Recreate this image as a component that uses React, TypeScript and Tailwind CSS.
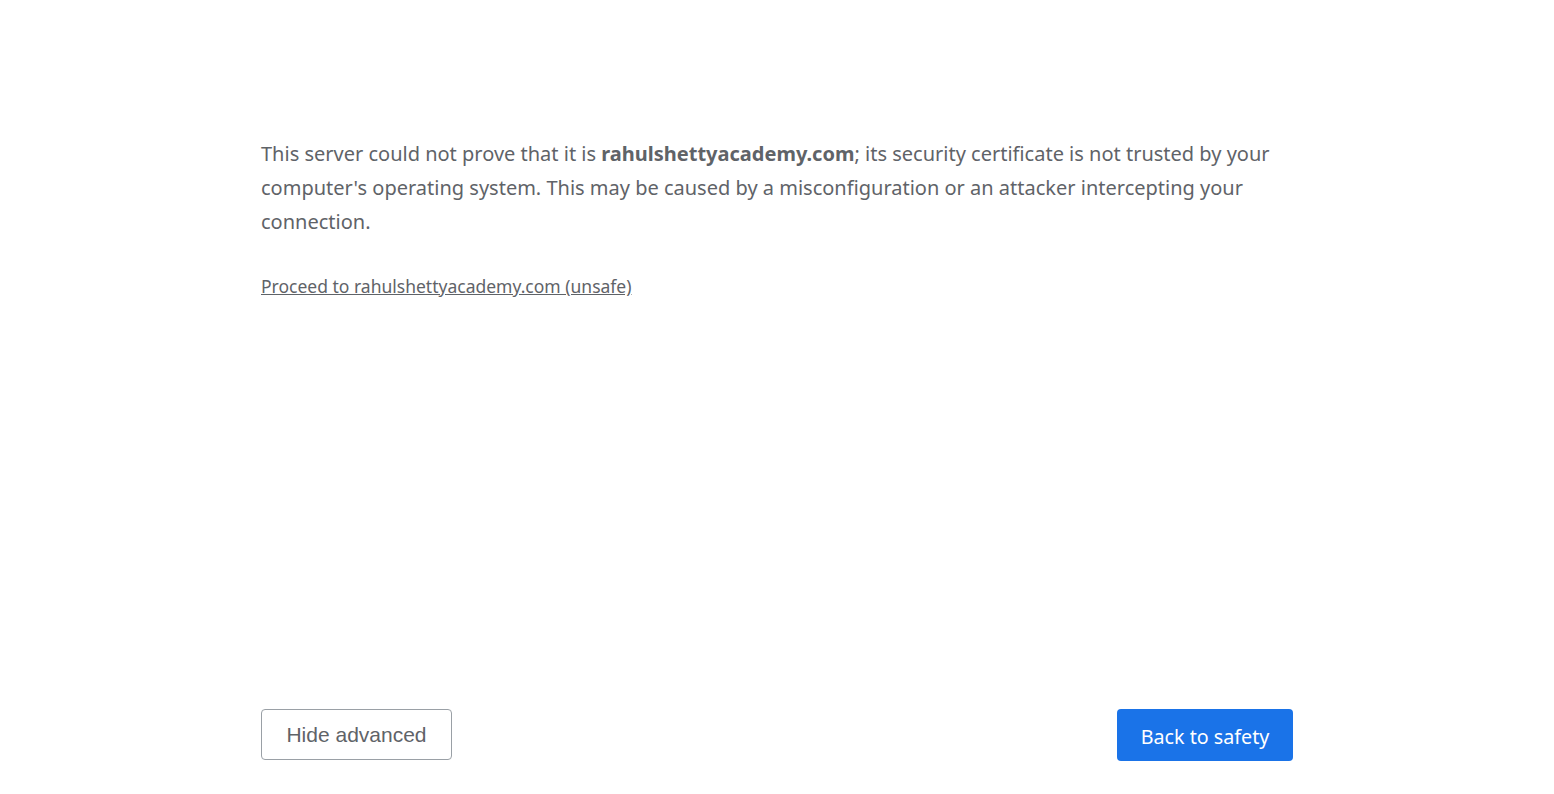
export default function App() {
  return (
    <div className="min-h-screen bg-white flex flex-col font-['Noto_Sans',sans-serif] text-[#5f6368]">
      <div className="w-[1032px] mx-auto flex-1 flex flex-col pt-[137px] pb-[33px]">
        {/* Details text */}
        <p className="text-[20px] leading-[34px]">
          This server could not prove that it is <strong className="font-bold">rahulshettyacademy.com</strong>; its
          security certificate is not trusted by your computer's operating system. This may be caused by a
          misconfiguration or an attacker intercepting your connection.
        </p>
        <p className="mt-[34px] text-[17.5px] leading-[26px]">
          <a href="#" className="underline text-[#5f6368]">
            Proceed to rahulshettyacademy.com (unsafe)
          </a>
        </p>

        {/* Buttons */}
        <div className="mt-auto flex items-start justify-between">
          <button className="h-[51px] w-[191px] rounded-[4px] border border-[#9aa0a6] bg-white text-[21px] font-['Liberation_Sans',sans-serif] text-[#5f6368]">
            Hide advanced
          </button>
          <button className="h-[52px] w-[176px] pt-[3px] rounded-[4px] bg-[#1a73e8] text-[19.7px] text-white">
            Back to safety
          </button>
        </div>
      </div>
    </div>
  );
}
